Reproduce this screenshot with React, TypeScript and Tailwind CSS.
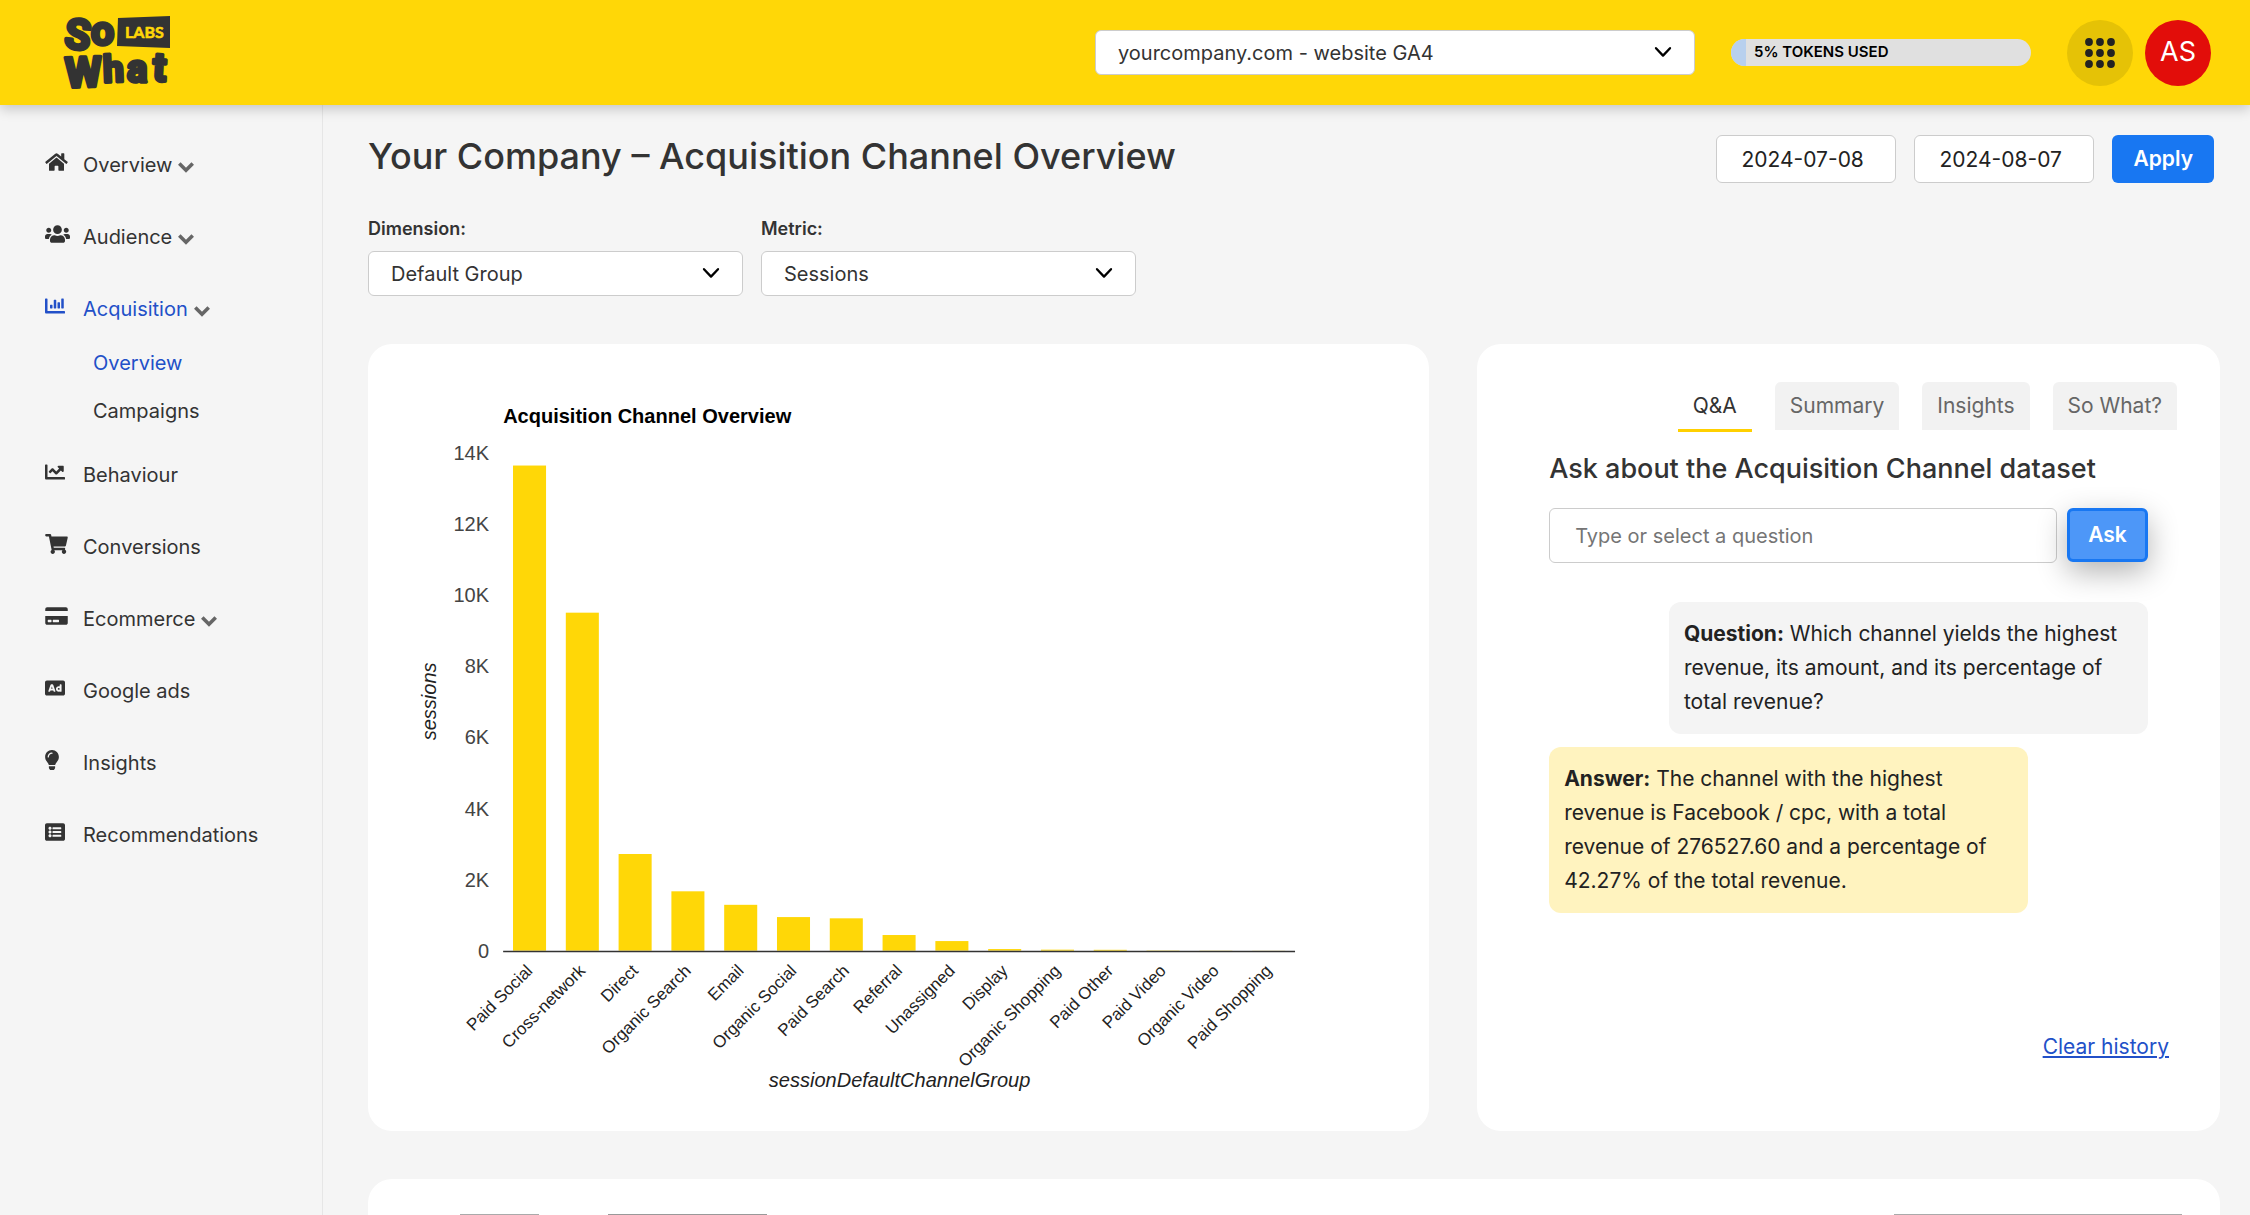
import React from 'react';
import type { IconType } from 'react-icons';
import {
  FaAd,
  FaChartBar,
  FaChartLine,
  FaCreditCard,
  FaHome,
  FaLightbulb,
  FaListAlt,
  FaShoppingCart,
  FaUsers,
} from 'react-icons/fa';

interface NavItem {
  label: string;
  icon: IconType;
  iconWidth: string;
  expandable?: boolean;
  active?: boolean;
  children?: { label: string; active?: boolean }[];
}

const navItems: NavItem[] = [
  { label: 'Overview', icon: FaHome, iconWidth: 'w-[23px]', expandable: true },
  { label: 'Audience', icon: FaUsers, iconWidth: 'w-[25px]', expandable: true },
  {
    label: 'Acquisition',
    icon: FaChartBar,
    iconWidth: 'w-5',
    expandable: true,
    active: true,
    children: [{ label: 'Overview', active: true }, { label: 'Campaigns' }],
  },
  { label: 'Behaviour', icon: FaChartLine, iconWidth: 'w-5' },
  { label: 'Conversions', icon: FaShoppingCart, iconWidth: 'w-[23px]' },
  { label: 'Ecommerce', icon: FaCreditCard, iconWidth: 'w-[23px]', expandable: true },
  { label: 'Google ads', icon: FaAd, iconWidth: 'w-5' },
  { label: 'Insights', icon: FaLightbulb, iconWidth: 'w-3.5' },
  { label: 'Recommendations', icon: FaListAlt, iconWidth: 'w-5' },
];

const channels = [
  { name: 'Paid Social', sessions: 13650 },
  { name: 'Cross-network', sessions: 9510 },
  { name: 'Direct', sessions: 2720 },
  { name: 'Organic Search', sessions: 1670 },
  { name: 'Email', sessions: 1290 },
  { name: 'Organic Social', sessions: 945 },
  { name: 'Paid Search', sessions: 910 },
  { name: 'Referral', sessions: 440 },
  { name: 'Unassigned', sessions: 270 },
  { name: 'Display', sessions: 45 },
  { name: 'Organic Shopping', sessions: 28 },
  { name: 'Paid Other', sessions: 24 },
  { name: 'Paid Video', sessions: 8 },
  { name: 'Organic Video', sessions: 5 },
  { name: 'Paid Shopping', sessions: 3 },
];

const tabs = ['Q&A', 'Summary', 'Insights', 'So What?'];

const Logo = () => (
  <svg viewBox="-8 -8 128 94" className="h-[94px] w-32 overflow-visible" role="img" aria-label="So What Labs">
    <g
      fill="#333333"
      stroke="#333333"
      strokeWidth="3.5"
      strokeLinejoin="round"
      fontFamily="Roboto, sans-serif"
      fontWeight="700"
    >
      <text x="3" y="35" fontSize="42" transform="rotate(6 15 20)">S</text>
      <text x="29" y="31" fontSize="41">o</text>
      <text x="3" y="73" fontSize="42" transform="rotate(-2 20 56)">W</text>
      <text x="41" y="68" fontSize="37" transform="rotate(-2 50 54)">h</text>
      <text x="65" y="68" fontSize="38">a</text>
      <text x="91" y="67" fontSize="40" transform="rotate(3 98 54)">t</text>
    </g>
    <polygon points="56,4 108,2 108,34 55,32" fill="#333333" />
    <text
      x="63"
      y="24"
      fontSize="16"
      fontWeight="700"
      fontFamily="Lato, sans-serif"
      fill="#ffd707"
      stroke="#ffd707"
      strokeWidth="0.6"
      strokeLinejoin="round"
    >
      LABS
    </text>
  </svg>
);

const NavChevron = () => (
  <svg viewBox="0 0 16 11" className="mt-1 h-[11px] w-4" fill="none" stroke="#666666" strokeWidth="3.6">
    <path d="M1.3 1.6 8 8.3l6.7-6.7" />
  </svg>
);

interface SelectProps {
  id: string;
  value: string;
  label?: string;
}

const Select: React.FC<SelectProps> = ({ id, value, label }) => (
  <div className="relative">
    <select
      id={id}
      aria-label={label}
      className="h-[45px] w-full appearance-none rounded-md border border-[#cccccc] bg-white pl-[22px] pr-14 text-xl font-normal text-[#333333]"
    >
      <option>{value}</option>
    </select>
    <svg
      viewBox="0 0 18 12"
      className="pointer-events-none absolute right-[23px] top-4 h-3 w-[18px]"
      fill="none"
      stroke="#000000"
      strokeWidth="2.3"
      strokeLinecap="round"
      strokeLinejoin="round"
    >
      <path d="M2 2.2 9 9.6l7-7.4" />
    </svg>
  </div>
);

const Header = () => (
  <header className="relative z-10 flex h-[105px] shrink-0 items-center justify-between bg-[#ffd707] pl-[54px] pr-[39px] shadow-[0_4px_12px_rgba(0,0,0,0.2)]">
    <a href="#home" aria-label="So What Labs">
      <Logo />
    </a>
    <div className="flex items-center gap-9">
      <div className="w-[600px]">
        <Select id="property" label="Property" value="yourcompany.com - website GA4" />
      </div>
      <div className="flex h-[27px] w-[300px] items-center overflow-hidden rounded-full bg-[#e0e0e0]">
        <div className="h-full w-[5%] bg-[#b8d0ee]" />
        <span className="pl-2 text-[15px] font-semibold text-black">5% TOKENS USED</span>
      </div>
      <div className="flex gap-3">
        <button
          type="button"
          aria-label="Apps"
          className="flex size-[66px] items-center justify-center rounded-full bg-[#e5c206]"
        >
          <svg viewBox="0 0 30 30" className="size-[30px]" fill="#222222">
            {[4, 15, 26].map((y) =>
              [4, 15, 26].map((x) => <circle key={`${x}-${y}`} cx={x} cy={y} r="3.9" />)
            )}
          </svg>
        </button>
        <button
          type="button"
          className="flex size-[66px] items-center justify-center rounded-full bg-[#e20d0a] text-[27px] text-white"
        >
          AS
        </button>
      </div>
    </div>
  </header>
);

const Sidebar = () => (
  <nav className="w-[323px] shrink-0 border-r border-[#e6e6e6] pt-6 text-xl text-[#333333]">
    <ul>
      {navItems.map(({ label, icon: Icon, iconWidth, expandable, active, children }) => (
        <li key={label}>
          <a
            href={`#${label}`}
            className={`flex h-[72px] items-center pl-[45px] ${active ? 'text-[#2250c8]' : ''}`}
          >
            <span className="w-[38px] pb-1.5">
              <Icon className={`h-5 ${iconWidth}`} />
            </span>
            <span className="pr-1.5">{label}</span>
            {expandable && <NavChevron />}
          </a>
          {children && (
            <ul className="-mt-1.5 mb-1">
              {children.map((child) => (
                <li key={child.label}>
                  <a
                    href={`#${child.label}`}
                    className={`flex h-12 items-center pl-[93px] ${child.active ? 'text-[#2250c8]' : ''}`}
                  >
                    {child.label}
                  </a>
                </li>
              ))}
            </ul>
          )}
        </li>
      ))}
    </ul>
  </nav>
);

// Plot area inside the 1012 x 738 viewBox
const PLOT = { left: 111, right: 902, top: 85, bottom: 582 };

const ChannelChart = () => {
  const step = (PLOT.right - PLOT.left) / channels.length;
  const scale = (PLOT.bottom - PLOT.top) / 14000;
  const barWidth = 33;

  return (
    <svg viewBox="0 0 1012 738" className="block h-auto w-full" fontFamily="'Liberation Sans', Arial, sans-serif">
      <text x="111" y="55" fontSize="20" fontWeight="700" fill="#000000">Acquisition Channel Overview</text>

      {/* Y axis labels */}
      {[14, 12, 10, 8, 6, 4, 2, 0].map((k) => (
        <text key={k} x="97" y={PLOT.bottom - k * 1000 * scale + 7} fontSize="20" textAnchor="end" fill="#444444">
          {k === 0 ? '0' : `${k}K`}
        </text>
      ))}

      {/* Bars with their slanted labels */}
      {channels.map(({ name, sessions }, i) => {
        const center = PLOT.left + step * (i + 0.5);
        const height = sessions * scale;
        return (
          <React.Fragment key={name}>
            <rect x={center - barWidth / 2} y={PLOT.bottom - height} width={barWidth} height={height} fill="#ffd707" />
            <text
              x={center + 4}
              y={PLOT.bottom + 21}
              fontSize="17"
              textAnchor="end"
              fill="#222222"
              transform={`rotate(-45 ${center + 4} ${PLOT.bottom + 21})`}
            >
              {name}
            </text>
          </React.Fragment>
        );
      })}

      <line x1={PLOT.left} y1="582.8" x2={PLOT.right} y2="582.8" stroke="#333333" strokeWidth="1.6" />

      {/* Axis titles */}
      <text x="507" y="718" fontSize="20" fontStyle="italic" textAnchor="middle" fill="#222222">
        sessionDefaultChannelGroup
      </text>
      <text x="44" y="333" fontSize="20" fontStyle="italic" textAnchor="middle" fill="#222222" transform="rotate(-90 44 333)">
        sessions
      </text>
    </svg>
  );
};

const AskPanel = () => (
  <section className="flex min-w-0 flex-col rounded-3xl bg-white pb-[68px] pt-[38px] text-[21px] text-[#222222]">
    <div role="tablist" className="flex h-[50px] items-start justify-end gap-[23px] pr-[43px]">
      {tabs.map((tab, i) => (
        <button
          key={tab}
          type="button"
          role="tab"
          aria-selected={i === 0}
          className={
            i === 0
              ? 'h-[50px] border-b-[3px] border-[#ffd000] px-[15px] text-[#333333]'
              : 'h-12 rounded-t-md bg-[#f2f2f2] px-[15px] text-[#666666]'
          }
        >
          {tab}
        </button>
      ))}
    </div>

    <div className="mt-5 px-[72px]">
      <h2 className="text-[27px] font-medium leading-[34px] text-[#333333]">
        Ask about the Acquisition Channel dataset
      </h2>
      <form className="mt-[22px] flex gap-2.5" onSubmit={(e) => e.preventDefault()}>
        <input
          type="text"
          aria-label="Question"
          placeholder="Type or select a question"
          className="h-[55px] min-w-0 flex-1 rounded-md border border-[#cccccc] bg-white px-[25px] text-xl placeholder:text-[#757575]"
        />
        <button
          type="submit"
          className="h-[54px] w-[81px] rounded-md border-[3px] border-[#1877f2] bg-[#4d97f8] font-semibold text-white shadow-[0_10px_30px_rgba(0,0,0,0.3)]"
        >
          Ask
        </button>
      </form>

      <div className="mt-[39px] flex flex-col gap-[13px] leading-[34px]">
        <p className="w-4/5 self-end rounded-xl bg-[#f4f4f4] p-[15px]">
          <strong>Question:</strong> Which channel yields the highest revenue, its amount, and its percentage of total
          revenue?
        </p>
        <p className="w-4/5 rounded-xl bg-[#fff3bf] p-[15px]">
          <strong>Answer:</strong> The channel with the highest revenue is Facebook / cpc, with a total revenue of
          276527.60 and a percentage of 42.27% of the total revenue.
        </p>
      </div>
    </div>

    <a href="#clear" className="mr-[51px] mt-auto self-end leading-8 text-[#2250c8] underline">
      Clear history
    </a>
  </section>
);

const DateInput: React.FC<{ label: string; value: string }> = ({ label, value }) => (
  <input
    type="text"
    aria-label={label}
    defaultValue={value}
    className="h-12 w-[180px] rounded-md border border-[#cccccc] bg-white px-6 text-[21px] text-[#222222]"
  />
);

export default function App() {
  return (
    <div className="flex h-screen flex-col overflow-hidden bg-[#f5f5f5] font-[Inter,sans-serif]">
      <Header />
      <div className="flex min-h-0 flex-1">
        <Sidebar />
        <main className="min-w-0 flex-1 overflow-hidden pl-[45px] pr-[30px] pt-[30px]">
          <div className="flex items-start justify-between pr-1.5">
            <h1 className="text-4xl font-medium leading-[42px] text-[#333333]">
              Your Company – Acquisition Channel Overview
            </h1>
            <div className="flex gap-[18px]">
              <DateInput label="Start date" value="2024-07-08" />
              <DateInput label="End date" value="2024-08-07" />
              <button type="button" className="h-12 rounded-md bg-[#1877f2] px-[21px] text-[21px] font-semibold text-white">
                Apply
              </button>
            </div>
          </div>

          <div className="mt-[34px] flex gap-[18px] text-lg font-semibold leading-6 text-[#333333]">
            <div className="w-[375px]">
              <label htmlFor="dimension" className="mb-2.5 block">Dimension:</label>
              <Select id="dimension" value="Default Group" />
            </div>
            <div className="w-[375px]">
              <label htmlFor="metric" className="mb-2.5 block">Metric:</label>
              <Select id="metric" value="Sessions" />
            </div>
          </div>

          <div className="mt-12 grid grid-cols-[10fr_7fr] gap-12">
            <section className="min-w-0 rounded-3xl bg-white p-6">
              <ChannelChart />
            </section>
            <AskPanel />
          </div>

          {/* Table toolbar */}
          <section className="mt-12 flex h-96 items-start rounded-3xl bg-white pl-[92px] pr-[38px] pt-[35px]">
            <select aria-label="Rows per page" className="h-11 w-[79px] appearance-none border border-[#aaaaaa]" />
            <button type="button" aria-label="Export" className="ml-[69px] h-11 w-[159px] border border-[#999999]" />
            <input type="search" aria-label="Search" className="ml-auto h-11 w-72 border border-[#aaaaaa]" />
          </section>
        </main>
      </div>
    </div>
  );
}
